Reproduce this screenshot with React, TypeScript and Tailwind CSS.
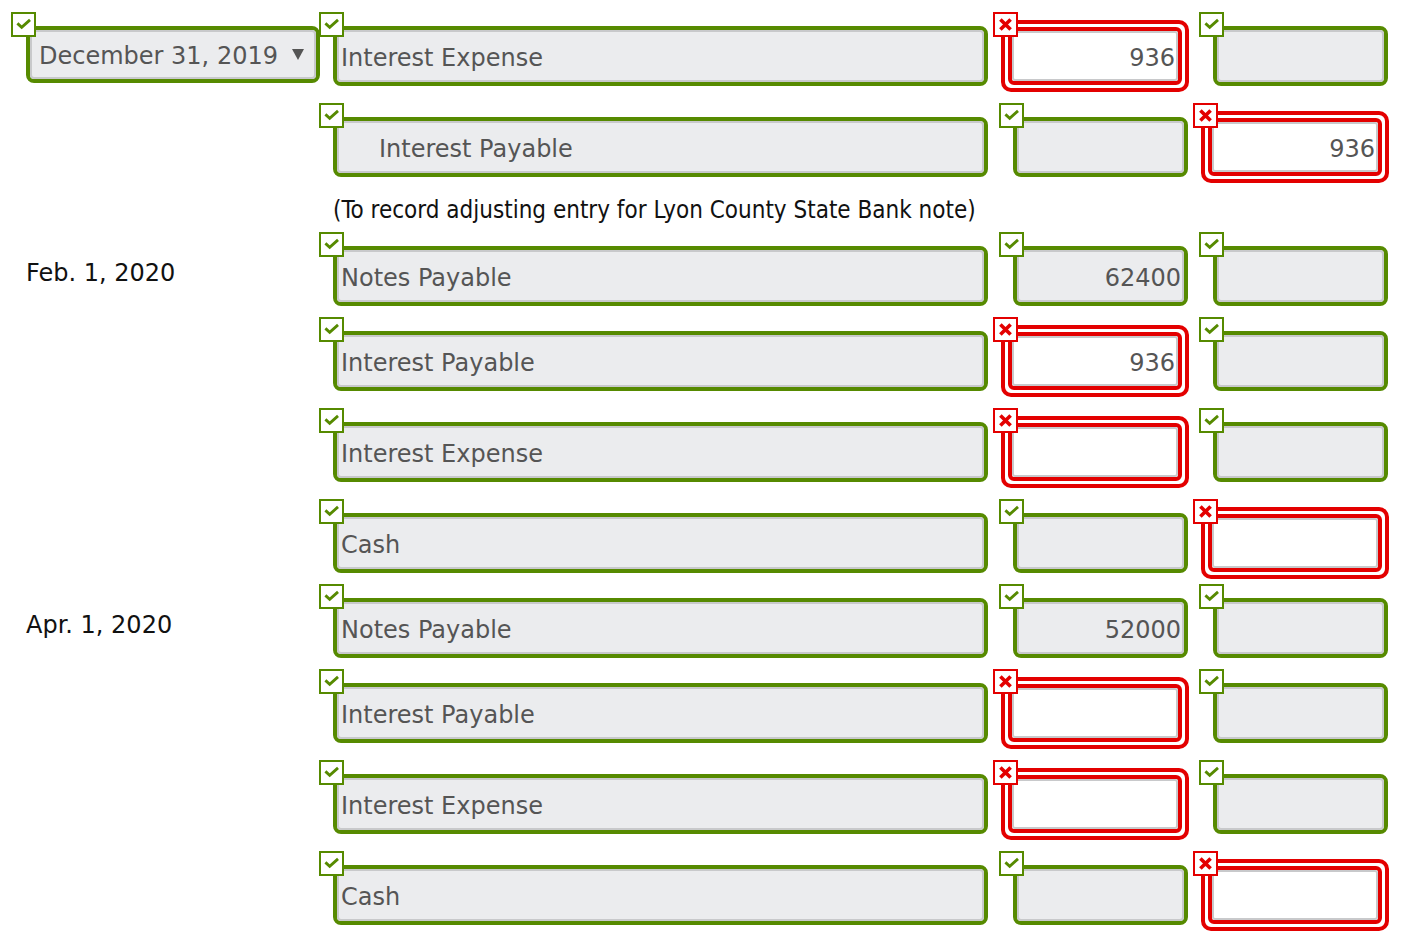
import React from 'react';

const font = { fontFamily: '"DejaVu Sans", Verdana, sans-serif' };

type Cell = { val: string; ok: boolean };
type Row = { date?: string; acct: string; indent?: boolean; debit: Cell; credit: Cell };

const rows: Row[] = [
    { date: 'select', acct: 'Interest Expense', debit: { val: '936', ok: false }, credit: { val: '', ok: true } },
    { acct: 'Interest Payable', indent: true, debit: { val: '', ok: true }, credit: { val: '936', ok: false } },
    { date: 'Feb. 1, 2020', acct: 'Notes Payable', debit: { val: '62400', ok: true }, credit: { val: '', ok: true } },
    { acct: 'Interest Payable', debit: { val: '936', ok: false }, credit: { val: '', ok: true } },
    { acct: 'Interest Expense', debit: { val: '', ok: false }, credit: { val: '', ok: true } },
    { acct: 'Cash', debit: { val: '', ok: true }, credit: { val: '', ok: false } },
    { date: 'Apr. 1, 2020', acct: 'Notes Payable', debit: { val: '52000', ok: true }, credit: { val: '', ok: true } },
    { acct: 'Interest Payable', debit: { val: '', ok: false }, credit: { val: '', ok: true } },
    { acct: 'Interest Expense', debit: { val: '', ok: false }, credit: { val: '', ok: true } },
    { acct: 'Cash', debit: { val: '', ok: true }, credit: { val: '', ok: false } },
];

const CheckBadge = ({ className }: { className: string }) => (
    <div className={`absolute w-[25px] h-[25px] bg-white border-2 border-[#568a00] ${className}`}>
        <svg width="21" height="21" viewBox="0 0 21 21">
            <polyline points="4.4,9.4 8.7,13.4 17,5.9" fill="none" stroke="#568a00" strokeWidth="2.8" />
        </svg>
    </div>
);

const CrossBadge = () => (
    <div className="absolute -left-[12px] -top-[12px] w-[25px] h-[25px] bg-white border-2 border-[#e30000]">
        <svg width="21" height="21" viewBox="0 0 21 21">
            <path d="M5.4 5.4 L15.6 15.6 M15.6 5.4 L5.4 15.6" fill="none" stroke="#e30000" strokeWidth="3.6" />
        </svg>
    </div>
);

const GreenField = ({ width, children, align = 'start', className = '' }: { width: string; children?: React.ReactNode; align?: 'start' | 'end'; className?: string }) => (
    <div className={`relative h-[60px] ${width} shrink-0`}>
        <CheckBadge className="-left-[14px] -top-[14px]" />
        <div className="h-full rounded-[8px] border-4 border-[#568a00] bg-[#ebecee]">
            <div className={`h-full rounded-[4px] border-2 border-[#c8c9cb] flex items-center pt-[4px] ${align === 'end' ? 'justify-end pr-[1px]' : 'justify-start'} ${className}`}>
                {children}
            </div>
        </div>
    </div>
);

const RedField = ({ children }: { children?: React.ReactNode }) => (
    <div className="h-[60px] w-[175px] shrink-0">
        <div className="relative -ml-[12px] -mt-[6px] w-[188px] h-[72px] rounded-[10px] border-4 border-[#e30000] bg-white p-[3px]">
            <CrossBadge />
            <div className="h-full rounded-[6px] border-4 border-[#e30000]">
                <div className="h-full rounded-[3px] border-2 border-[#c8c9cb] bg-white flex items-center justify-end pr-[1px] pt-[4px]">
                    {children}
                </div>
            </div>
        </div>
    </div>
);

const Amount = ({ cell }: { cell: Cell }) => {
    const text = <span className="text-[24px] text-[#555555]">{cell.val}</span>;
    return cell.ok ? <GreenField width="w-[175px]" align="end">{text}</GreenField> : <RedField>{text}</RedField>;
};

const DateSelect = () => (
    <div className="relative ml-[26px] w-[294px] h-[57px]">
        <CheckBadge className="-left-[15px] -top-[14px]" />
        <div className="h-full rounded-[8px] border-4 border-[#568a00] bg-[#ebecee]">
            <div className="h-full rounded-[4px] border-2 border-[#c8c9cb] flex items-center justify-between pl-[7px] pr-[10px]">
                <span className="text-[24px] text-[#555555] pt-[3px]">December 31, 2019</span>
                <svg width="12" height="11" viewBox="0 0 12 11">
                    <polygon points="0,0 12,0 6,11" fill="#555555" />
                </svg>
            </div>
        </div>
    </div>
);

const App = () => {
    return (
        <div className="w-[1421px] h-[950px] bg-white pt-[26px]" style={font}>
            {rows.map((row, i) => {
                const prev = rows[i - 1];
                const mt = i === 0 || i === 2 ? '' : prev.debit.ok ? 'mt-[25px]' : 'mt-[31px]';
                return (
                    <React.Fragment key={i}>
                        <div className={`flex items-start ${mt}`}>
                            <div className="w-[333px] shrink-0 h-[60px]">
                                {row.date === 'select' ? (
                                    <DateSelect />
                                ) : row.date ? (
                                    <div className="pl-[26px] pt-[13px] text-[24px] leading-[28px] text-[#111111]">{row.date}</div>
                                ) : null}
                            </div>
                            <GreenField width="w-[655px]" className={row.indent ? 'pl-[40px]' : 'pl-[2px]'}>
                                <span className="text-[24px] text-[#555555]">{row.acct}</span>
                            </GreenField>
                            <div className="w-[25px] shrink-0" />
                            <Amount cell={row.debit} />
                            <div className="w-[25px] shrink-0" />
                            <Amount cell={row.credit} />
                        </div>
                        {i === 1 && (
                            <div className="h-[69px] pl-[333px] pt-[19px]">
                                <p className="text-[24px] leading-[28px] text-[#111111]" style={{ fontFamily: '"DejaVu Sans Condensed", "DejaVu Sans", sans-serif' }}>
                                    (To record adjusting entry for Lyon County State Bank note)
                                </p>
                            </div>
                        )}
                    </React.Fragment>
                );
            })}
        </div>
    );
};

export default App;
